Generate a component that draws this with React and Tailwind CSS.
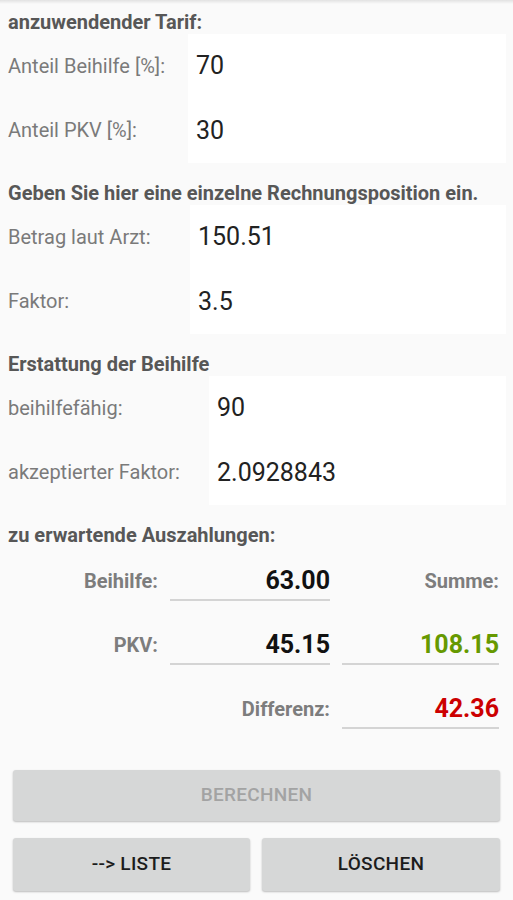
import React from 'react';

const font = { fontFamily: 'Roboto, "Noto Sans", sans-serif' };

const Heading = ({ children, className = '' }) => (
  <div className={`h-6 px-2 text-[20px] leading-6 font-bold text-[#575757] ${className}`}>
    {children}
  </div>
);

const InputTable = ({ rows, labelWidth }) => (
  <div className="flex">
    <div className={`${labelWidth} shrink-0`}>
      {rows.map((r) => (
        <div key={r.label} className="h-[64px] flex items-center pl-2 text-[20px] text-[#7a7a7a]">
          {r.label}
        </div>
      ))}
    </div>
    <div className="flex-1 mr-[7px] bg-white">
      {rows.map((r, i) => (
        <div
          key={r.label}
          className={`h-[64px] flex items-center pl-2 text-[25px] text-[#222] ${i === 1 ? 'h-[65px]' : ''}`}
        >
          {r.value}
        </div>
      ))}
    </div>
  </div>
);

const Field = ({ value, color = 'text-[#111]' }) => (
  <div className="h-[44px] border-b-2 border-[#d4d4d4] flex items-end justify-end pb-1">
    <span className={`text-[25px] leading-[28px] font-bold ${color}`}>{value}</span>
  </div>
);

const Label = ({ children }) => (
  <div className="h-[44px] flex items-end justify-end pb-[6px] text-[20px] leading-[28px] font-bold text-[#7d7d7d]">
    {children}
  </div>
);

const Button = ({ children, disabled, className = '' }) => (
  <button
    className={`rounded-[3px] bg-[#d6d7d7] shadow-[0_1px_2px_rgba(0,0,0,0.25)] text-[19px] font-medium tracking-[0.3px] ${
      disabled ? 'text-[#a3a3a3]' : 'text-[#1c1c1c]'
    } ${className}`}
  >
    {children}
  </button>
);

export default function App() {
  return (
    <div style={font} className="relative min-h-[900px] w-full bg-[#fafafa] overflow-hidden">
      <div className="absolute inset-x-0 top-0 h-[4px] bg-gradient-to-b from-[#e2e2e2] to-[#fafafa]" />
      <div className="pt-[10px]">
        <Heading>anzuwendender Tarif:</Heading>
        <InputTable
          labelWidth="w-[188px]"
          rows={[
            { label: 'Anteil Beihilfe [%]:', value: '70' },
            { label: 'Anteil PKV [%]:', value: '30' },
          ]}
        />

        <Heading className="mt-[18px]">Geben Sie hier eine einzelne Rechnungsposition ein.</Heading>
        <InputTable
          labelWidth="w-[190px]"
          rows={[
            { label: 'Betrag laut Arzt:', value: '150.51' },
            { label: 'Faktor:', value: '3.5' },
          ]}
        />

        <Heading className="mt-[18px]">Erstattung der Beihilfe</Heading>
        <InputTable
          labelWidth="w-[209px]"
          rows={[
            { label: 'beihilfefähig:', value: '90' },
            { label: 'akzeptierter Faktor:', value: '2.0928843' },
          ]}
        />

        <Heading className="mt-[18px]">zu erwartende Auszahlungen:</Heading>

        <div className="mt-[10px] grid grid-cols-[158px_160px_157px] gap-x-[12px] gap-y-[20px]">
          <Label>Beihilfe:</Label>
          <Field value="63.00" />
          <Label>Summe:</Label>

          <Label>PKV:</Label>
          <Field value="45.15" />
          <Field value="108.15" color="text-[#669900]" />

          <div />
          <Label>Differenz:</Label>
          <Field value="42.36" color="text-[#cc0000]" />
        </div>

        <div className="mt-[41px] px-[13px] flex flex-col gap-[17px]">
          <Button disabled className="h-[51px] w-[487px]">
            BERECHNEN
          </Button>
          <div className="flex gap-[12px]">
            <Button className="h-[53px] w-[237px]">--&gt; LISTE</Button>
            <Button className="h-[53px] w-[238px]">LÖSCHEN</Button>
          </div>
        </div>
      </div>
    </div>
  );
}
